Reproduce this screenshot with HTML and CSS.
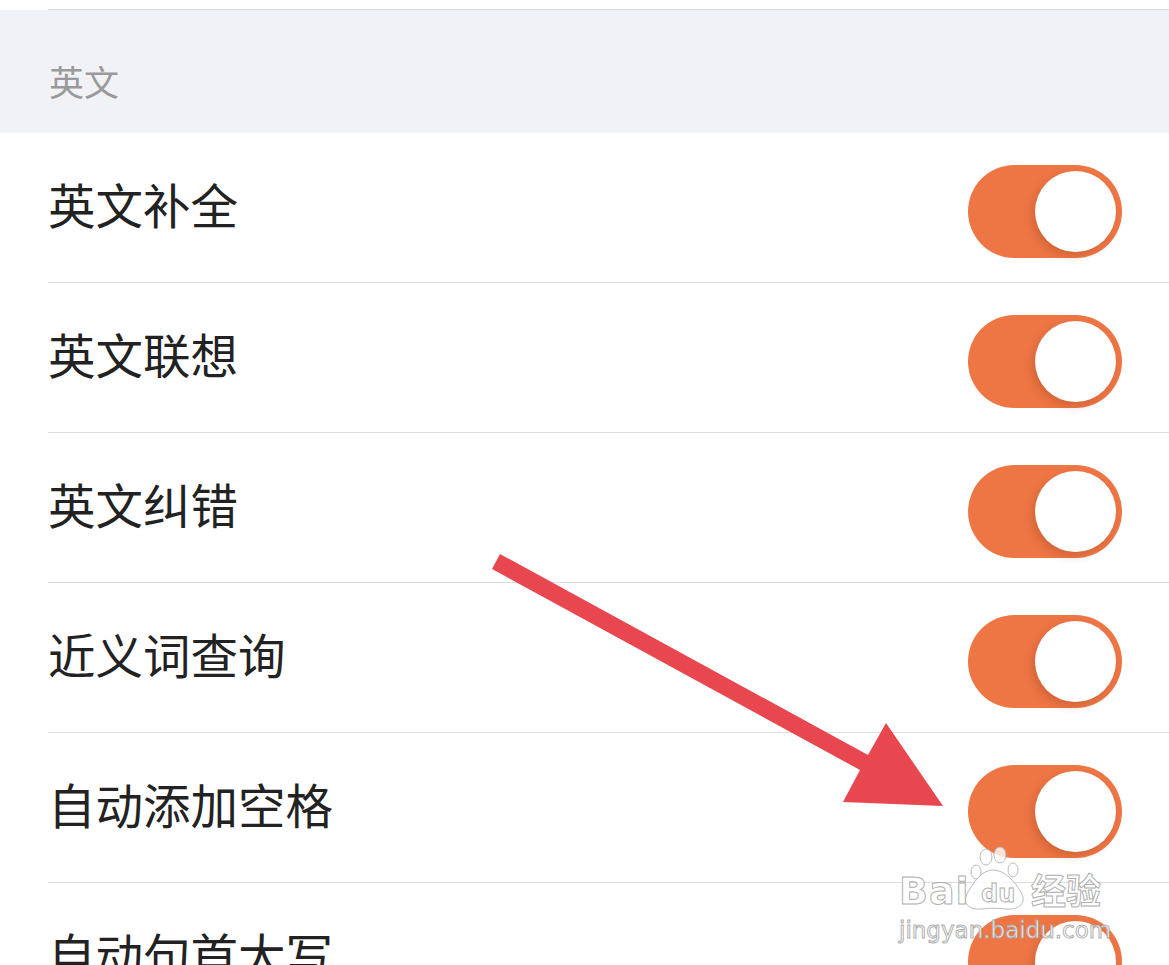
FILE: index.html
```html
<!DOCTYPE html>
<html lang="zh-CN">
<head>
<meta charset="utf-8">
<title>英文设置</title>
<link rel="stylesheet" href="styles.css">
</head>
<body>
<div class="page">
  <div class="top"><div class="top-line"></div></div>
  <div class="section-header">英文</div>
  <div class="list">
    <div class="row"><span class="label">英文补全</span><span class="toggle"><span class="knob"></span></span></div>
    <div class="row"><span class="label">英文联想</span><span class="toggle"><span class="knob"></span></span></div>
    <div class="row"><span class="label">英文纠错</span><span class="toggle"><span class="knob"></span></span></div>
    <div class="row"><span class="label">近义词查询</span><span class="toggle"><span class="knob"></span></span></div>
    <div class="row"><span class="label">自动添加空格</span><span class="toggle"><span class="knob"></span></span></div>
    <div class="row"><span class="label">自动句首大写</span><span class="toggle"><span class="knob"></span></span></div>
  </div>

  <svg class="arrow" width="1169" height="965" viewBox="0 0 1169 965">
    <polygon points="500,554 868,755 886,723 943,806 843,802 860,770 492,569" fill="#e8474f"/>
  </svg>

  <svg class="watermark" width="220" height="110" viewBox="0 0 220 110">
    <g fill="rgba(255,255,255,0.8)" stroke="rgba(175,175,175,0.85)" stroke-width="1">
      <ellipse cx="91" cy="17" rx="6" ry="8"/>
      <ellipse cx="105" cy="15" rx="6" ry="8"/>
      <ellipse cx="81" cy="32" rx="5" ry="7"/>
      <ellipse cx="118" cy="30" rx="5" ry="7"/>
      <path d="M98 30 C86 30 78 44 73 52 C66 63 74 70 86 69 C93 68 104 68 112 69 C125 70 132 62 126 52 C120 42 110 30 98 30 Z"/>
    </g>
    <g fill="rgba(255,255,255,0.9)" stroke="rgba(165,165,165,0.9)" stroke-width="1">
      <text x="4" y="64" class="wm-big">Bai</text>
      <text x="86" y="62" class="wm-du">du</text>
      <text x="136" y="64" class="wm-cn">经验</text>
      <text x="4" y="98" class="wm-url">jingyan.baidu.com</text>
    </g>
  </svg>
</div>
</body>
</html>
```

FILE: styles.css
```css
html, body {
  margin: 0;
  padding: 0;
  background: #ffffff;
}
body {
  font-family: "Noto Sans CJK SC", "Noto Sans", sans-serif;
}
.page {
  position: relative;
  width: 1169px;
  height: 965px;
  overflow: hidden;
  background: #ffffff;
}
.top {
  height: 10px;
  padding-left: 48px;
  box-sizing: border-box;
  background: #ffffff;
}
.top-line {
  height: 10px;
  box-sizing: border-box;
  border-bottom: 1px solid #dcdcdc;
}
.section-header {
  height: 123px;
  box-sizing: border-box;
  background: #f1f2f6;
  color: #9a9a9a;
  font-size: 35px;
  padding-left: 49px;
  padding-top: 18px;
  display: flex;
  align-items: center;
}
.list {
  display: flex;
  flex-direction: column;
}
.row {
  height: 150px;
  box-sizing: border-box;
  margin-left: 48px;
  padding-left: 0;
  padding-right: 47px;
  border-bottom: 1px solid #dddddd;
  display: flex;
  align-items: center;
  justify-content: space-between;
}
.label {
  font-size: 47.5px;
  color: #222222;
  padding-bottom: 8px;
}
.toggle {
  width: 154px;
  height: 93px;
  border-radius: 47px;
  background: #ee7645;
  display: flex;
  align-items: center;
  justify-content: flex-end;
  padding-right: 6px;
  box-sizing: border-box;
  margin-top: 8px;
}
.knob {
  width: 81px;
  height: 81px;
  border-radius: 50%;
  background: #ffffff;
  box-shadow: -3px 4px 8px rgba(140, 55, 20, 0.28);
}
.arrow {
  position: absolute;
  left: 0;
  top: 0;
  pointer-events: none;
}
.watermark {
  position: absolute;
  left: 895px;
  top: 840px;
  pointer-events: none;
}
.wm-big {
  font-family: "DejaVu Sans", sans-serif;
  font-weight: 700;
  font-size: 38px;
  letter-spacing: 1px;
}
.wm-du {
  font-family: "DejaVu Sans", sans-serif;
  font-weight: 700;
  font-size: 24px;
}
.wm-cn {
  font-family: "Noto Sans CJK SC", sans-serif;
  font-weight: 700;
  font-size: 35px;
}
.wm-url {
  font-family: "DejaVu Sans", sans-serif;
  font-size: 23px;
}
```
